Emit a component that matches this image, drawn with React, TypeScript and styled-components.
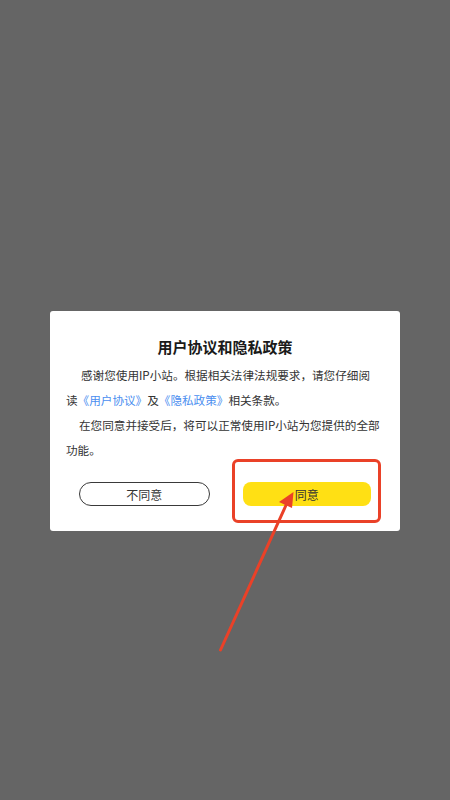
import React from "react";
import styled, { createGlobalStyle } from "styled-components";

const Global = createGlobalStyle`
  html, body { margin: 0; padding: 0; background: #656565; }
  body { font-family: "Noto Sans CJK SC", "Noto Sans", sans-serif; }
  * { box-sizing: border-box; }
`;

const Page = styled.div`
  position: relative;
  width: 450px;
  height: 800px;
  background: #656565;
  padding-top: 311px;
  overflow: hidden;
`;

const Dialog = styled.div`
  margin: 0 50px;
  width: 350px;
  background: #ffffff;
  border-radius: 3px;
  padding: 24px 16px 25px;
`;

const Title = styled.h1`
  margin: 0;
  font-size: 15px;
  line-height: 24px;
  font-weight: 700;
  color: #1a1a1a;
  text-align: center;
`;

const Body = styled.div`
  margin-top: 4px;
`;

const Para = styled.p<{ indent: number }>`
  margin: 0;
  font-size: 11.6px;
  line-height: 25px;
  color: #333333;
  text-indent: ${(p) => p.indent}px;
`;

const Link = styled.span`
  color: #4a8ef0;
`;

const Buttons = styled.div`
  display: flex;
  gap: 33px;
  padding: 0 13px;
  margin-top: 19px;
`;

const Btn = styled.button<{ primary?: boolean }>`
  flex: 1;
  height: 24px;
  padding: 0;
  font-family: inherit;
  font-size: 12px;
  color: #333333;
  border-radius: ${(p) => (p.primary ? "8px" : "12px")};
  border: ${(p) => (p.primary ? "none" : "1px solid #3a3a3a")};
  background: ${(p) => (p.primary ? "#ffe014" : "#ffffff")};
`;

const Highlight = styled.div`
  position: absolute;
  left: 232px;
  top: 459px;
  width: 149px;
  height: 64px;
  border: 3px solid #ea4128;
  border-radius: 6px;
`;

const ArrowSvg = styled.svg`
  position: absolute;
  left: 0;
  top: 0;
`;

export default function App() {
  return (
    <Page>
      <Global />
      <Dialog>
        <Title>用户协议和隐私政策</Title>
        <Body>
          <Para indent={15}>
            感谢您使用IP小站。根据相关法律法规要求，请您仔细阅
            <br />
            读<Link>《用户协议》</Link>及<Link>《隐私政策》</Link>相关条款。
          </Para>
          <Para indent={13}>在您同意并接受后，将可以正常使用IP小站为您提供的全部功能。</Para>
        </Body>
        <Buttons>
          <Btn>不同意</Btn>
          <Btn primary>同意</Btn>
        </Buttons>
      </Dialog>
      <Highlight />
      <ArrowSvg width="450" height="800" viewBox="0 0 450 800">
        <line x1="220.5" y1="650" x2="287" y2="503" stroke="#ea4128" strokeWidth="3" strokeLinecap="round" />
        <polygon points="293.5,492 279,502 292,508" fill="#ea4128" />
      </ArrowSvg>
    </Page>
  );
}
